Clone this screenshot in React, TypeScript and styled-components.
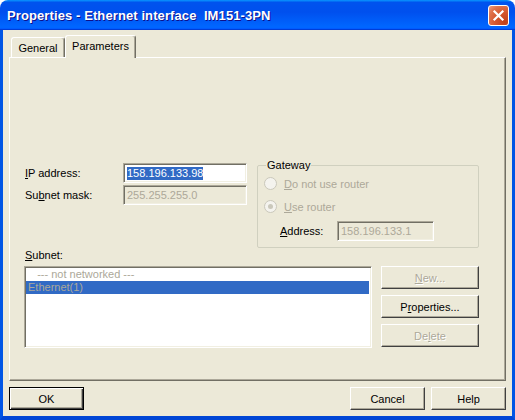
import styled, { createGlobalStyle } from "styled-components";

const GlobalStyle = createGlobalStyle`
	html, body {
		margin: 0;
		padding: 0;
		background: #ffffff;
	}
	body {
		font-family: "Liberation Sans", Arial, sans-serif;
		font-size: 11px;
		color: #000000;
	}
`;

const Window = styled.div`
	width: 515px;
	height: 420px;
	display: flex;
	flex-direction: column;
`;

const TitleBar = styled.div`
	height: 30px;
	flex: none;
	display: flex;
	align-items: center;
	justify-content: space-between;
	padding: 0 6px 0 7px;
	border-radius: 8px 8px 0 0;
	background: linear-gradient(
		180deg,
		#0997ff,
		#0053ee 8%,
		#0050ee 40%,
		#0066ff 88%,
		#0066ff 93%,
		#005bff 95%,
		#003dd7 96%,
		#003dd7
	);
`;

const Title = styled.span`
	color: #ffffff;
	font-weight: bold;
	font-size: 13px;
	white-space: pre;
	text-shadow: 1px 1px #0f1089;
	letter-spacing: 0.1px;
`;

const CloseButton = styled.div`
	width: 21px;
	height: 21px;
	box-sizing: border-box;
	border: 1px solid #ffffff;
	border-radius: 3px;
	background: radial-gradient(
		circle at 85% 85%,
		#c1401a 0%,
		#d5582f 45%,
		#e0734d 75%,
		#f0a080 100%
	);
	display: flex;
	align-items: center;
	justify-content: center;
`;

const Body = styled.div`
	flex: 1;
	display: flex;
	flex-direction: column;
	background: #ece9d8;
	border-left: 3px solid #0055e5;
	border-right: 3px solid #0055e5;
	border-bottom: 4px solid #0046d5;
	padding: 5px 6px 6px 6px;
	gap: 6px;
`;

const TabStrip = styled.div`
	display: flex;
	align-items: flex-end;
	padding-left: 2px;
	height: 22px;
	position: relative;
	z-index: 1;
	margin-bottom: -6px;
`;

const Tab = styled.div<{ $active?: boolean }>`
	box-sizing: border-box;
	width: ${(p) => (p.$active ? 71 : 54)}px;
	height: ${(p) => (p.$active ? 23 : 20)}px;
	margin-bottom: ${(p) => (p.$active ? -1 : 0)}px;
	display: flex;
	align-items: center;
	justify-content: center;
	padding-bottom: ${(p) => (p.$active ? 2 : 0)}px;
	background: #ece9d8;
	border: 1px solid;
	border-color: #ffffff #716f64 transparent #ffffff;
	border-bottom: none;
	border-radius: 3px 3px 0 0;
	box-shadow: inset -1px 0 #aca899;
`;

const Panel = styled.div`
	height: 324px;
	box-sizing: border-box;
	display: flex;
	flex-direction: column;
	border: 1px solid;
	border-color: #ffffff #716f64 #716f64 #ffffff;
	box-shadow: inset -1px -1px #aca899;
	padding: 101px 0 0 14px;
`;

const TopRow = styled.div`
	display: flex;
	align-items: flex-start;
`;

const FieldGrid = styled.div`
	display: grid;
	grid-template-columns: 99px 124px;
	grid-auto-rows: 20px;
	row-gap: 2px;
	align-items: center;
	margin-top: 4px;
`;

const Label = styled.span<{ $disabled?: boolean }>`
	padding-left: 1px;
	color: ${(p) => (p.$disabled ? "#aca899" : "#000000")};
	white-space: nowrap;
`;

const Key = styled.span`
	text-decoration: underline;
`;

const TextBox = styled.div<{ $disabled?: boolean; $width: number }>`
	box-sizing: border-box;
	width: ${(p) => p.$width}px;
	height: 20px;
	display: flex;
	align-items: center;
	border: 1px solid;
	border-color: #aca899 #ffffff #ffffff #aca899;
	box-shadow: inset 1px 1px #716f64, inset -1px -1px #f1efe2;
	background: ${(p) => (p.$disabled ? "#ece9d8" : "#ffffff")};
	color: ${(p) => (p.$disabled ? "#aca899" : "#000000")};
	padding-left: 3px;
	white-space: nowrap;
`;

const Selected = styled.span`
	background: #316ac5;
	color: #ffffff;
	line-height: 13px;
`;

const GroupBox = styled.fieldset`
	box-sizing: border-box;
	width: 222px;
	height: 89px;
	margin: 0 0 0 10px;
	padding: 4px 0 6px 6px;
	border: 1px solid #d0d0bf;
	border-radius: 2px;
	display: flex;
	flex-direction: column;
`;

const Legend = styled.legend`
	padding: 0 1px;
	margin-left: 2px;
	line-height: 13px;
	font-size: 11px;
`;

const RadioRow = styled.div<{ $gap?: number }>`
	height: 15px;
	display: flex;
	align-items: center;
	gap: 6px;
	margin-top: ${(p) => p.$gap ?? 0}px;
`;

const Radio = styled.span<{ $checked?: boolean }>`
	box-sizing: border-box;
	width: 13px;
	height: 13px;
	border-radius: 50%;
	border: 1px solid #cac8bb;
	background: #f4f3ee;
	display: flex;
	align-items: center;
	justify-content: center;
	&::after {
		content: "";
		width: 5px;
		height: 5px;
		border-radius: 50%;
		background: ${(p) => (p.$checked ? "#cac8bb" : "transparent")};
	}
`;

const AddressRow = styled.div`
	display: flex;
	align-items: center;
	margin: 7px 0 0 16px;
	height: 20px;
`;

const AddressLabel = styled.span`
	width: 57px;
`;

const SubnetLabel = styled.div`
	margin-top: 1px;
	padding-left: 1px;
	line-height: 13px;
`;

const SubnetRow = styled.div`
	display: flex;
	align-items: flex-start;
	gap: 9px;
	margin-top: 4px;
`;

const ListBox = styled.div`
	box-sizing: border-box;
	width: 348px;
	height: 82px;
	border: 1px solid;
	border-color: #aca899 #ffffff #ffffff #aca899;
	box-shadow: inset 1px 1px #716f64, inset -1px -1px #f1efe2;
	background: #ffffff;
	padding: 1px 2px 1px 1px;
`;

const ListItem = styled.div<{ $selected?: boolean }>`
	height: 13px;
	line-height: 13px;
	padding-left: 2px;
	white-space: pre;
	color: #aca899;
	background: ${(p) => (p.$selected ? "#316ac5" : "transparent")};
`;

const ButtonColumn = styled.div`
	display: flex;
	flex-direction: column;
	gap: 6px;
`;

const Button = styled.div<{ $disabled?: boolean; $default?: boolean; $width: number }>`
	box-sizing: border-box;
	width: ${(p) => p.$width}px;
	height: 23px;
	display: flex;
	align-items: center;
	justify-content: center;
	background: #ece9d8;
	border: 1px solid;
	border-color: ${(p) =>
		p.$default ? "#000000" : "#ffffff #404040 #404040 #ffffff"};
	box-shadow: ${(p) =>
		p.$default
			? "inset 1px 1px #ffffff, inset -1px -1px #404040, inset -2px -2px #aca899"
			: "inset -1px -1px #aca899"};
	color: ${(p) => (p.$disabled ? "#aca899" : "#000000")};
	text-shadow: ${(p) => (p.$disabled ? "1px 1px #ffffff" : "none")};
`;

const Footer = styled.div`
	display: flex;
	align-items: center;
	gap: 6px;
`;

const Spacer = styled.div`
	flex: 1;
`;

export default function App() {
	return (
		<Window>
			<GlobalStyle />
			<TitleBar>
				<Title>Properties - Ethernet interface  IM151-3PN</Title>
				<CloseButton>
					<svg width="13" height="13" viewBox="0 0 13 13">
						<path
							d="M2.5 2.5 L10.5 10.5 M10.5 2.5 L2.5 10.5"
							stroke="#ffffff"
							strokeWidth="2.2"
							strokeLinecap="square"
						/>
					</svg>
				</CloseButton>
			</TitleBar>
			<Body>
				<TabStrip>
					<Tab>General</Tab>
					<Tab $active>Parameters</Tab>
				</TabStrip>
				<Panel>
					<TopRow>
						<FieldGrid>
							<Label>
								<Key>I</Key>P address:
							</Label>
							<TextBox $width={124}>
								<Selected>158.196.133.98</Selected>
							</TextBox>
							<Label>
								Su<Key>b</Key>net mask:
							</Label>
							<TextBox $width={124} $disabled>
								255.255.255.0
							</TextBox>
						</FieldGrid>
						<GroupBox>
							<Legend>Gateway</Legend>
							<RadioRow>
								<Radio />
								<Label $disabled>
									<Key>D</Key>o not use router
								</Label>
							</RadioRow>
							<RadioRow $gap={8}>
								<Radio $checked />
								<Label $disabled>
									<Key>U</Key>se router
								</Label>
							</RadioRow>
							<AddressRow>
								<AddressLabel>
									<Key>A</Key>ddress:
								</AddressLabel>
								<TextBox $width={97} $disabled>
									158.196.133.1
								</TextBox>
							</AddressRow>
						</GroupBox>
					</TopRow>
					<SubnetLabel>
						<Key>S</Key>ubnet:
					</SubnetLabel>
					<SubnetRow>
						<ListBox>
							<ListItem>{"   --- not networked ---"}</ListItem>
							<ListItem $selected>Ethernet(1)</ListItem>
						</ListBox>
						<ButtonColumn>
							<Button $width={98} $disabled>
								<span>
									<Key>N</Key>ew...
								</span>
							</Button>
							<Button $width={98}>
								<span>
									P<Key>r</Key>operties...
								</span>
							</Button>
							<Button $width={98} $disabled>
								<span>
									De<Key>l</Key>ete
								</span>
							</Button>
						</ButtonColumn>
					</SubnetRow>
				</Panel>
				<Footer>
					<Button $width={75} $default>
						OK
					</Button>
					<Spacer />
					<Button $width={75}>Cancel</Button>
					<Button $width={75}>Help</Button>
				</Footer>
			</Body>
		</Window>
	);
}
